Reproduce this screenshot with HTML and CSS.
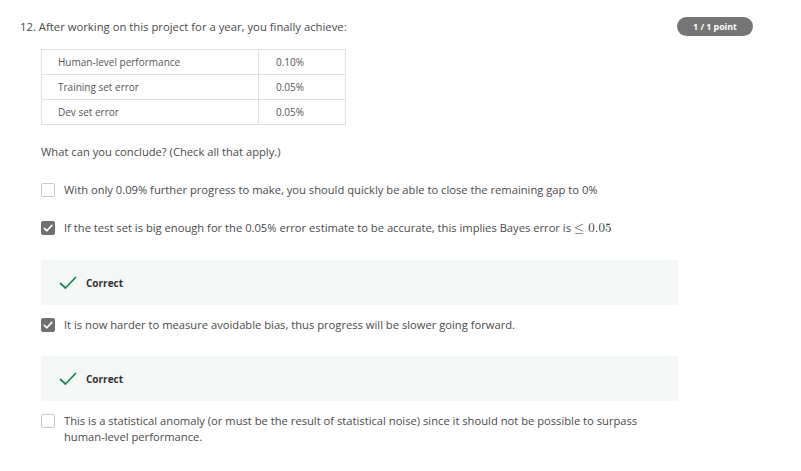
FILE: index.html
```html
<!DOCTYPE html>
<html>
<head>
<meta charset="utf-8">
<link rel="stylesheet" href="styles.css">
</head>
<body>
<div class="page">
  <div class="header">
    <div class="title">12. After working on this project for a year, you finally achieve:</div>
    <div class="badge">1 / 1 point</div>
  </div>
  <div class="content">
    <table class="data">
      <tr><td class="c1">Human-level performance</td><td class="c2">0.10%</td></tr>
      <tr><td class="c1">Training set error</td><td class="c2">0.05%</td></tr>
      <tr><td class="c1">Dev set error</td><td class="c2">0.05%</td></tr>
    </table>
    <div class="prompt">What can you conclude? (Check all that apply.)</div>

    <div class="option">
      <span class="box"></span>
      <span class="otext">With only 0.09% further progress to make, you should quickly be able to close the remaining gap to 0%</span>
    </div>

    <div class="option checked">
      <span class="box"><svg viewBox="0 0 14 14" width="14" height="14"><path d="M3.3 7.3 L5.9 9.8 L10.8 4.4" fill="none" stroke="#fff" stroke-width="1.6" stroke-linecap="round" stroke-linejoin="round"/></svg></span>
      <span class="otext">If the test set is big enough for the 0.05% error estimate to be accurate, this implies Bayes error is <span class="math">≤ 0.05</span></span>
    </div>

    <div class="feedback">
      <svg class="tick" viewBox="0 0 18 14" width="18" height="14"><path d="M1.5 7.5 L6.5 12 L16.5 1.5" fill="none" stroke="#1f8354" stroke-width="1.8" stroke-linecap="round" stroke-linejoin="round"/></svg>
      <span class="ftext">Correct</span>
    </div>

    <div class="option checked">
      <span class="box"><svg viewBox="0 0 14 14" width="14" height="14"><path d="M3.3 7.3 L5.9 9.8 L10.8 4.4" fill="none" stroke="#fff" stroke-width="1.6" stroke-linecap="round" stroke-linejoin="round"/></svg></span>
      <span class="otext">It is now harder to measure avoidable bias, thus progress will be slower going forward.</span>
    </div>

    <div class="feedback">
      <svg class="tick" viewBox="0 0 18 14" width="18" height="14"><path d="M1.5 7.5 L6.5 12 L16.5 1.5" fill="none" stroke="#1f8354" stroke-width="1.8" stroke-linecap="round" stroke-linejoin="round"/></svg>
      <span class="ftext">Correct</span>
    </div>

    <div class="option">
      <span class="box"></span>
      <span class="otext">This is a statistical anomaly (or must be the result of statistical noise) since it should not be possible to surpass human-level performance.</span>
    </div>
  </div>
</div>
</body>
</html>
```
FILE: styles.css
```css
* { box-sizing: border-box; }
body {
  margin: 0;
  background: #fff;
  font-family: "Open Sans", "Noto Sans", sans-serif;
  color: #4a4a4a;
}
.page {
  padding: 17px 48px 0 20px;
}
.header {
  display: flex;
  justify-content: space-between;
  align-items: center;
  height: 19px;
}
.title {
  font-size: 11.3px;
  color: #4a4a4a;
}
.badge {
  width: 76px;
  height: 19px;
  border-radius: 10px;
  background: #757575;
  color: #fff;
  font-size: 8.8px;
  font-weight: 700;
  display: flex;
  align-items: center;
  justify-content: center;
}
.content {
  margin-left: 21px;
  width: 637px;
}
.data {
  margin-top: 13px;
  border-collapse: collapse;
  width: 305px;
  font-size: 10px;
  color: #555;
}
.data td {
  border: 1px solid #e0e0e0;
  height: 25px;
  padding: 0;
}
.data .c1 { width: 217px; padding-left: 16px; }
.data .c2 { padding-left: 17px; }
.prompt {
  margin-top: 19px;
  font-size: 11.2px;
  line-height: 16px;
  color: #4a4a4a;
}
.option {
  display: flex;
  align-items: flex-start;
  margin-top: 22px;
  font-size: 11.2px;
  line-height: 16px;
}
.feedback + .option { margin-top: 12px; }
.box {
  flex: none;
  width: 14px;
  height: 14px;
  border: 1px solid #c8c8c8;
  border-radius: 2px;
  margin-top: 1px;
  margin-right: 9px;
  background: #fff;
}
.checked .box {
  background: #6f6f6f;
  border-color: #6f6f6f;
}
.checked .box svg { display: block; margin: -1px; }
.otext { flex: 1; }
.math {
  font-family: "Latin Modern Math", "DejaVu Serif", "Liberation Serif", serif;
  font-size: 13px;
  color: #333;
}
.feedback {
  margin-top: 23px;
  height: 45px;
  background: #f3f8f6;
  display: flex;
  align-items: center;
  padding-left: 18px;
}
.tick { display: block; margin-right: 9px; }
.ftext {
  font-size: 10px;
  font-weight: 700;
  color: #333;
}
```
